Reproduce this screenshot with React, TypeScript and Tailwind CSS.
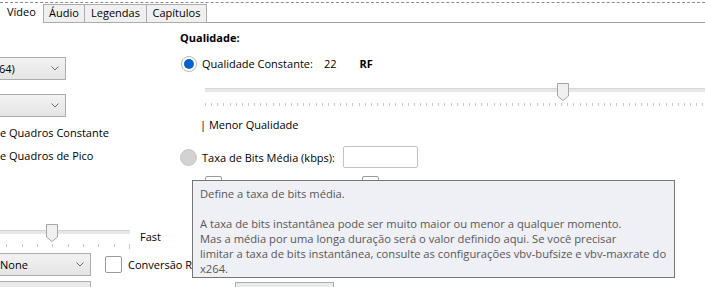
const QUALITY_TICKS = Array.from({ length: 103 }, (_, i) => i)
const PRESET_TICKS = Array.from({ length: 10 }, (_, i) => i)

function Chevron() {
  return (
    <svg width="8" height="5" viewBox="0 0 8 5" fill="none" stroke="#707070" strokeWidth="1" aria-hidden="true">
      <path d="M0.5 0.5 4 4 7.5 0.5" />
    </svg>
  )
}

function Thumb() {
  return (
    <svg width="12" height="18" viewBox="0 0 12 18" aria-hidden="true">
      <path d="M0.5 0.5h11v12.5L6 17.5 0.5 13z" fill="#f0f0f0" stroke="#a6a6a6" />
    </svg>
  )
}

function Combo({ label, className }: { label: string; className: string }) {
  return (
    <div className={`flex items-center justify-between h-[23px] border border-[#adadad] bg-gradient-to-b from-[#f2f2f2] to-[#e5e5e5] pr-[6px] ${className}`}>
      <span>{label}</span>
      <Chevron />
    </div>
  )
}

function Checkbox({ className = '' }: { className?: string }) {
  return <div className={`w-[17px] h-[17px] shrink-0 rounded-[2px] border border-[#9a9a9a] bg-white ${className}`} />
}

export default function App() {
  return (
    <div className="relative w-[705px] h-[287px] overflow-hidden bg-white text-black text-[11px] leading-[16px] font-['Open_Sans',sans-serif]">
      <div className="h-[2px]" />
      <div className="border-t border-dashed border-[#8c8c8c]" />

      {/* Tab strip */}
      <div className="flex items-end h-[20px]">
        <div className="w-[43px] h-[20px] pl-[7px] pt-[1px] bg-white">Vídeo</div>
        <div className="w-[42px] h-[19px] border border-[#acacac] bg-[#f0f0f0] text-center">Áudio</div>
        <div className="w-[62px] h-[19px] border border-l-0 border-[#acacac] bg-[#f0f0f0] text-center">Legendas</div>
        <div className="w-[60px] h-[19px] border border-l-0 border-[#acacac] bg-[#f0f0f0] text-center">Capítulos</div>
        <div className="flex-1 h-[19px] border-b border-[#a0a0a0]" />
      </div>

      <div className="flex">
        {/* Left column (cut off by the window edge) */}
        <div className="w-[180px] shrink-0 flex flex-col items-start">
          <Combo label="64)" className="mt-[34px] -ml-[4px] w-[70px] pl-[2px]" />
          <Combo label="" className="mt-[14px] -ml-[4px] w-[70px]" />
          <div className="mt-[8px]">e Quadros Constante</div>
          <div className="mt-[7px]">e Quadros de Pico</div>

          <div className="mt-[60px] flex items-start">
            <div className="relative -ml-[9px] w-[139px] h-[24px]">
              <div className="mt-[6px] h-[4px] bg-[#e7e7e7] border-t border-[#d6d6d6]" />
              <div className="mt-[10px] flex justify-between">
                {PRESET_TICKS.map(i => (
                  <div key={i} className={`w-px bg-[#c4c4c4] ${i === 9 ? 'h-[5px]' : 'h-[3px]'}`} />
                ))}
              </div>
              <div className="absolute left-[55px] top-0">
                <Thumb />
              </div>
            </div>
            <span className="ml-[10px] mt-[5px]">Fast</span>
          </div>

          <div className="mt-[5px] flex items-center">
            <Combo label="None" className="-ml-[4px] w-[95px] pl-[3px]" />
            <Checkbox className="ml-[14px]" />
            <span className="ml-[6px] whitespace-nowrap">Conversão R</span>
          </div>

          <div className="mt-[5px] -ml-[4px] w-[95px] h-[22px] border border-[#adadad] bg-[#eaeaea]" />
        </div>

        {/* Right column */}
        <div className="flex-1 flex flex-col items-start">
          <div className="mt-[7px] font-bold">Qualidade:</div>

          <div className="mt-[9px] flex items-center h-[17px]">
            <div className="w-[16px] h-[16px] ml-[1px] rounded-full border border-[#b8b8b8] bg-white flex items-center justify-center">
              <div className="w-[10px] h-[10px] rounded-full bg-[#0063c6]" />
            </div>
            <span className="ml-[5px]">Qualidade Constante:</span>
            <span className="ml-[11px]">22</span>
            <span className="ml-[23px] font-bold">RF</span>
          </div>

          <div className="relative mt-[11px] ml-[25px] w-[628px] h-[24px] shrink-0">
            <div className="mt-[5px] h-[4px] bg-[#e7e7e7] border-t border-[#d6d6d6]" />
            <div className="mt-[11px] flex justify-between">
              {QUALITY_TICKS.map(i => (
                <div key={i} className="w-px h-[3px] bg-[#c8c8c8]" />
              ))}
            </div>
            <div className="absolute left-[352px] top-0">
              <Thumb />
            </div>
          </div>

          <div className="mt-[10px] ml-[20px]">| Menor Qualidade</div>

          <div className="mt-[13px] flex items-center h-[22px]">
            <div className="w-[17px] h-[17px] rounded-full border border-[#c6c6c6] bg-[#d2d2d2]" />
            <span className="ml-[5px] mt-[2px]">Taxa de Bits Média (kbps):</span>
            <div className="ml-[8px] w-[75px] h-[22px] rounded-[2px] border border-[#c2c2c2] bg-white" />
          </div>

          <div className="mt-[8px] flex">
            <Checkbox className="ml-[25px]" />
            <Checkbox className="ml-[140px]" />
          </div>

          <div className="mt-[89px] ml-[55px] w-[99px] h-[22px] border border-[#adadad] bg-[#eaeaea]" />
        </div>
      </div>

      {/* Tooltip */}
      <div className="absolute left-[192px] top-[180px] w-[483px] h-[98px] border border-[#767676] bg-[#eff0f5] pl-[7px] pt-[5px] text-[11.2px] leading-[15px] text-[#575757]">
        <div>Define a taxa de bits média.</div>
        <div>&nbsp;</div>
        <div>A taxa de bits instantânea pode ser muito maior ou menor a qualquer momento.</div>
        <div>Mas a média por uma longa duração será o valor definido aqui. Se você precisar</div>
        <div>limitar a taxa de bits instantânea, consulte as configurações vbv-bufsize e vbv-maxrate do</div>
        <div>x264.</div>
      </div>
    </div>
  )
}
